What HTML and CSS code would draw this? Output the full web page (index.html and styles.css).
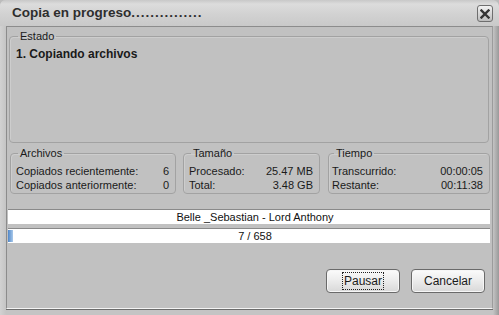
FILE: index.html
```html
<!DOCTYPE html>
<html lang="es">
<head>
    <meta charset="UTF-8">
    <title>Copia en progreso</title>
    <link rel="stylesheet" href="styles.css">
</head>
<body>
    <div class="window">
        <div class="titlebar">
            <span class="title">Copia en progreso<span class="dots">...............</span></span>
            <button class="close-btn" title="Cerrar">
                <svg width="10" height="10" viewBox="0 0 10 10">
                    <path d="M1.5 1.5 L8.5 8.5 M8.5 1.5 L1.5 8.5" stroke="#333" stroke-width="2.4" stroke-linecap="square" fill="none"/>
                </svg>
            </button>
        </div>

        <div class="content">
            <fieldset class="group group-estado">
                <legend>Estado</legend>
                <div class="status">1. Copiando archivos</div>
            </fieldset>

            <div class="stats">
                <fieldset class="group group-archivos">
                    <legend>Archivos</legend>
                    <div class="row"><span>Copiados recientemente:</span><span>6</span></div>
                    <div class="row"><span>Copiados anteriormente:</span><span>0</span></div>
                </fieldset>
                <fieldset class="group group-tamano">
                    <legend>Tamaño</legend>
                    <div class="row"><span>Procesado:</span><span>25.47 MB</span></div>
                    <div class="row"><span>Total:</span><span>3.48 GB</span></div>
                </fieldset>
                <fieldset class="group group-tiempo">
                    <legend>Tiempo</legend>
                    <div class="row"><span>Transcurrido:</span><span>00:00:05</span></div>
                    <div class="row"><span>Restante:</span><span>00:11:38</span></div>
                </fieldset>
            </div>

            <div class="bar bar-file">
                <span class="bar-text">Belle _Sebastian - Lord Anthony</span>
            </div>
            <div class="bar bar-progress">
                <div class="bar-fill" style="width: 5px"></div>
                <span class="bar-text">7 / 658</span>
            </div>

            <div class="actions">
                <button class="btn"><span class="focus">Pausar</span></button>
                <button class="btn">Cancelar</button>
            </div>
        </div>
    </div>
</body>
</html>
```

FILE: styles.css
```css
body {
    margin: 0;
    padding: 0;
    background-color: #bcbcbc;
    font-family: "Liberation Sans", Arial, sans-serif;
    font-size: 11px;
    color: #1a1a1a;
}

.window {
    width: 499px;
    height: 315px;
    box-sizing: border-box;
    display: flex;
    flex-direction: column;
    background: linear-gradient(to right, #d2d2d2 0, #c4c4c4 6px, #c4c4c4 493px, #9a9a9a 499px);
    border-top-left-radius: 6px;
    border-top-right-radius: 6px;
    overflow: hidden;
}

.titlebar {
    height: 26px;
    flex: none;
    display: flex;
    justify-content: space-between;
    align-items: flex-start;
    background: linear-gradient(to bottom, #c8c8c8 0, #dcdcdc 4px, #d2d2d2 14px, #c9c9c9 26px);
}

.title {
    margin: 5px 0 0 12px;
    font-size: 13.5px;
    font-weight: bold;
    color: #2e2e2e;
    line-height: 16px;
}

.dots {
    letter-spacing: 1px;
}

.close-btn {
    width: 16px;
    height: 17px;
    margin: 5px 6px 0 0;
    padding: 0;
    display: flex;
    justify-content: center;
    align-items: center;
    border: 1px solid #6e6e6e;
    border-radius: 3px;
    background: linear-gradient(to bottom, #f2f2f2, #bcbcbc);
}

.content {
    flex: 1;
    margin: 0 6px 6px 6px;
    padding: 3px 2px 0 1px;
    border-top: 1px solid #8c8c8c;
    border-left: 1px solid #8c8c8c;
    border-right: 1px solid #9c9c9c;
    border-bottom: 1px solid #f4f4f4;
    background-color: #c1c1c1;
    box-shadow: 0 1px 0 #6c6c6c;
    display: flex;
    flex-direction: column;
}

.group {
    margin: 0;
    padding: 0 5px;
    border: 1px solid #a2a2a2;
    border-radius: 4px;
    box-shadow: inset 1px 1px 0 #cdcdcd;
    min-width: 0;
}

.group legend {
    padding: 0 2px;
    margin-left: 2px;
    line-height: 13px;
    color: #1a1a1a;
}

.group-estado {
    height: 113px;
    box-sizing: border-box;
    margin: 0 1px;
    padding: 4px 6px 0 6px;
}

.status {
    font-size: 12px;
    font-weight: bold;
    line-height: 14px;
}

.stats {
    display: flex;
    margin: 4px 0 0 2px;
    gap: 7px;
}

.stats .group {
    padding: 4px 6px 1px 5px;
}

.group-archivos {
    width: 166px;
    box-sizing: border-box;
}

.group-tamano {
    width: 137px;
    box-sizing: border-box;
}

.group-tiempo {
    flex: 1;
    margin-left: 1px;
    padding-left: 3px !important;
}

.row {
    display: flex;
    justify-content: space-between;
    line-height: 14px;
}

.bar {
    position: relative;
    height: 14px;
    margin-top: 15px;
    border-top: 1px solid #8a8a8a;
    background-color: #ffffff;
    display: flex;
    justify-content: center;
    align-items: center;
    padding-left: 12px;
}

.bar-progress {
    margin-top: 4px;
}

.bar-text {
    line-height: 14px;
    color: #111;
}

.bar-fill {
    position: absolute;
    left: 0;
    top: 1px;
    bottom: 1px;
    background: linear-gradient(to right, #4f86c8, #a9c9ea);
}

.actions {
    display: flex;
    justify-content: flex-end;
    gap: 11px;
    margin-top: 26px;
    padding-right: 5px;
}

.btn {
    width: 74px;
    height: 24px;
    padding: 0;
    border: 1px solid #6a6a6a;
    border-radius: 4px;
    background: linear-gradient(to bottom, #fbfbfb 0, #ededed 45%, #d8d8d8 100%);
    box-shadow: inset 0 0 0 1px #f6f6f6;
    font-family: "Liberation Sans", Arial, sans-serif;
    font-size: 12px;
    color: #1a1a1a;
    cursor: pointer;
}

.focus {
    display: inline-block;
    padding: 1px 1px;
    border: 1px dotted #222;
    line-height: 14px;
}
```
